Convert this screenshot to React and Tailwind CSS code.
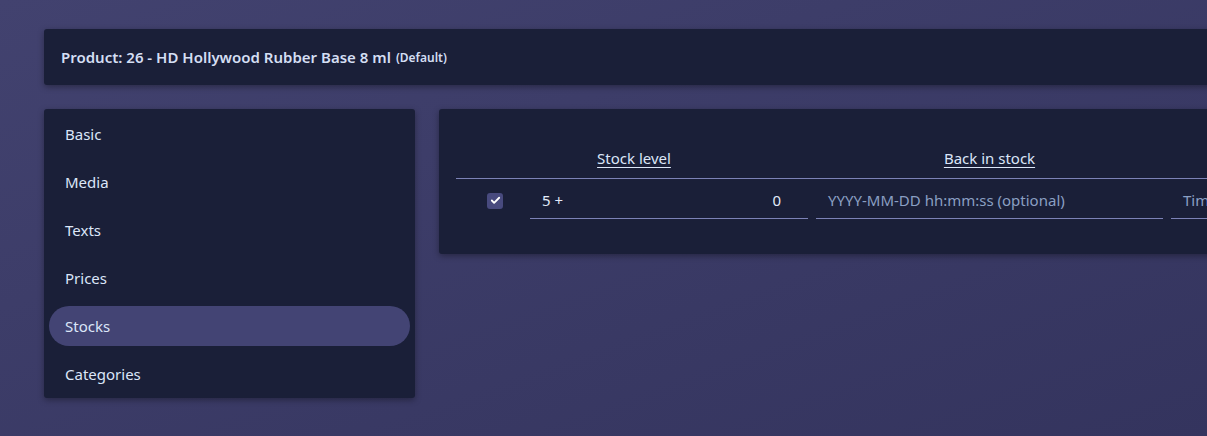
import React from 'react';
import { Check } from 'lucide-react';

const menu = ['Basic', 'Media', 'Texts', 'Prices', 'Stocks', 'Categories'];

const App = () => {
    return (
        <div
            className="w-full h-[436px] overflow-hidden bg-gradient-to-br from-[#42426f] to-[#34345e] pt-[29px] pl-[44px]"
            style={{ fontFamily: '"Noto Sans", "Open Sans", sans-serif' }}
        >
            {/* Header */}
            <div className="w-[1300px] h-[56px] flex items-center px-[17px] rounded-[3px] bg-[#1a1f38] shadow-[0_2px_6px_rgba(0,0,0,0.35)] text-[#d4def3]">
                <span className="text-[15px] font-semibold">Product: 26 - HD Hollywood Rubber Base 8 ml</span>
                <span className="text-[12px] font-semibold ml-[5px] mt-[2px]">(Default)</span>
            </div>

            <div className="flex gap-[24px] mt-[24px] items-start">
                {/* Sidebar */}
                <div className="w-[371px] shrink-0 flex flex-col gap-[8px] p-[5px] pb-[4px] rounded-[3px] bg-[#1a1f38] shadow-[0_2px_6px_rgba(0,0,0,0.35)]">
                    {menu.map((item) => (
                        <div
                            key={item}
                            className={`h-[40px] flex items-center pl-[16px] text-[15px] text-[#dce6f8] rounded-full ${item === 'Stocks' ? 'bg-[#434474]' : ''}`}
                        >
                            {item}
                        </div>
                    ))}
                </div>

                {/* Stocks card */}
                <div className="w-[900px] shrink-0 pt-[30px] pb-[35px] pl-[17px] rounded-[3px] bg-[#1a1f38] shadow-[0_2px_6px_rgba(0,0,0,0.35)]">
                    <div className="flex h-[40px] items-center border-b border-[#7c82b6] text-[15px] text-[#dce6f8]">
                        <div className="w-[356px] text-center"><span className="underline underline-offset-[3px]">Stock level</span></div>
                        <div className="w-[355px] text-center"><span className="underline underline-offset-[3px]">Back in stock</span></div>
                        <div className="flex-1"></div>
                    </div>

                    <div className="flex items-center pt-[3px]">
                        <div className="w-[74px] flex justify-start pl-[31px]">
                            <div className="w-[16px] h-[16px] rounded-[3px] bg-[#484a7e] flex items-center justify-center">
                                <Check className="w-[11px] h-[11px] text-white" strokeWidth={4} />
                            </div>
                        </div>
                        <div className="w-[282px] pr-[4px]">
                            <div className="h-[37px] flex items-center justify-between border-b border-[#7c82b6] pl-[12px] pr-[27px] text-[15px] text-[#e2eaf9]">
                                <span>5 +</span>
                                <span>0</span>
                            </div>
                        </div>
                        <div className="w-[355px] px-[4px]">
                            <div className="h-[37px] flex items-center border-b border-[#7c82b6] pl-[12px] text-[15px] text-[#8a9fc3]">
                                YYYY-MM-DD hh:mm:ss (optional)
                            </div>
                        </div>
                        <div className="flex-1 pl-[4px]">
                            <div className="h-[37px] flex items-center border-b border-[#7c82b6] pl-[12px] text-[15px] text-[#8a9fc3]">
                                Time to restock
                            </div>
                        </div>
                    </div>
                </div>
            </div>
        </div>
    );
};

export default App;
